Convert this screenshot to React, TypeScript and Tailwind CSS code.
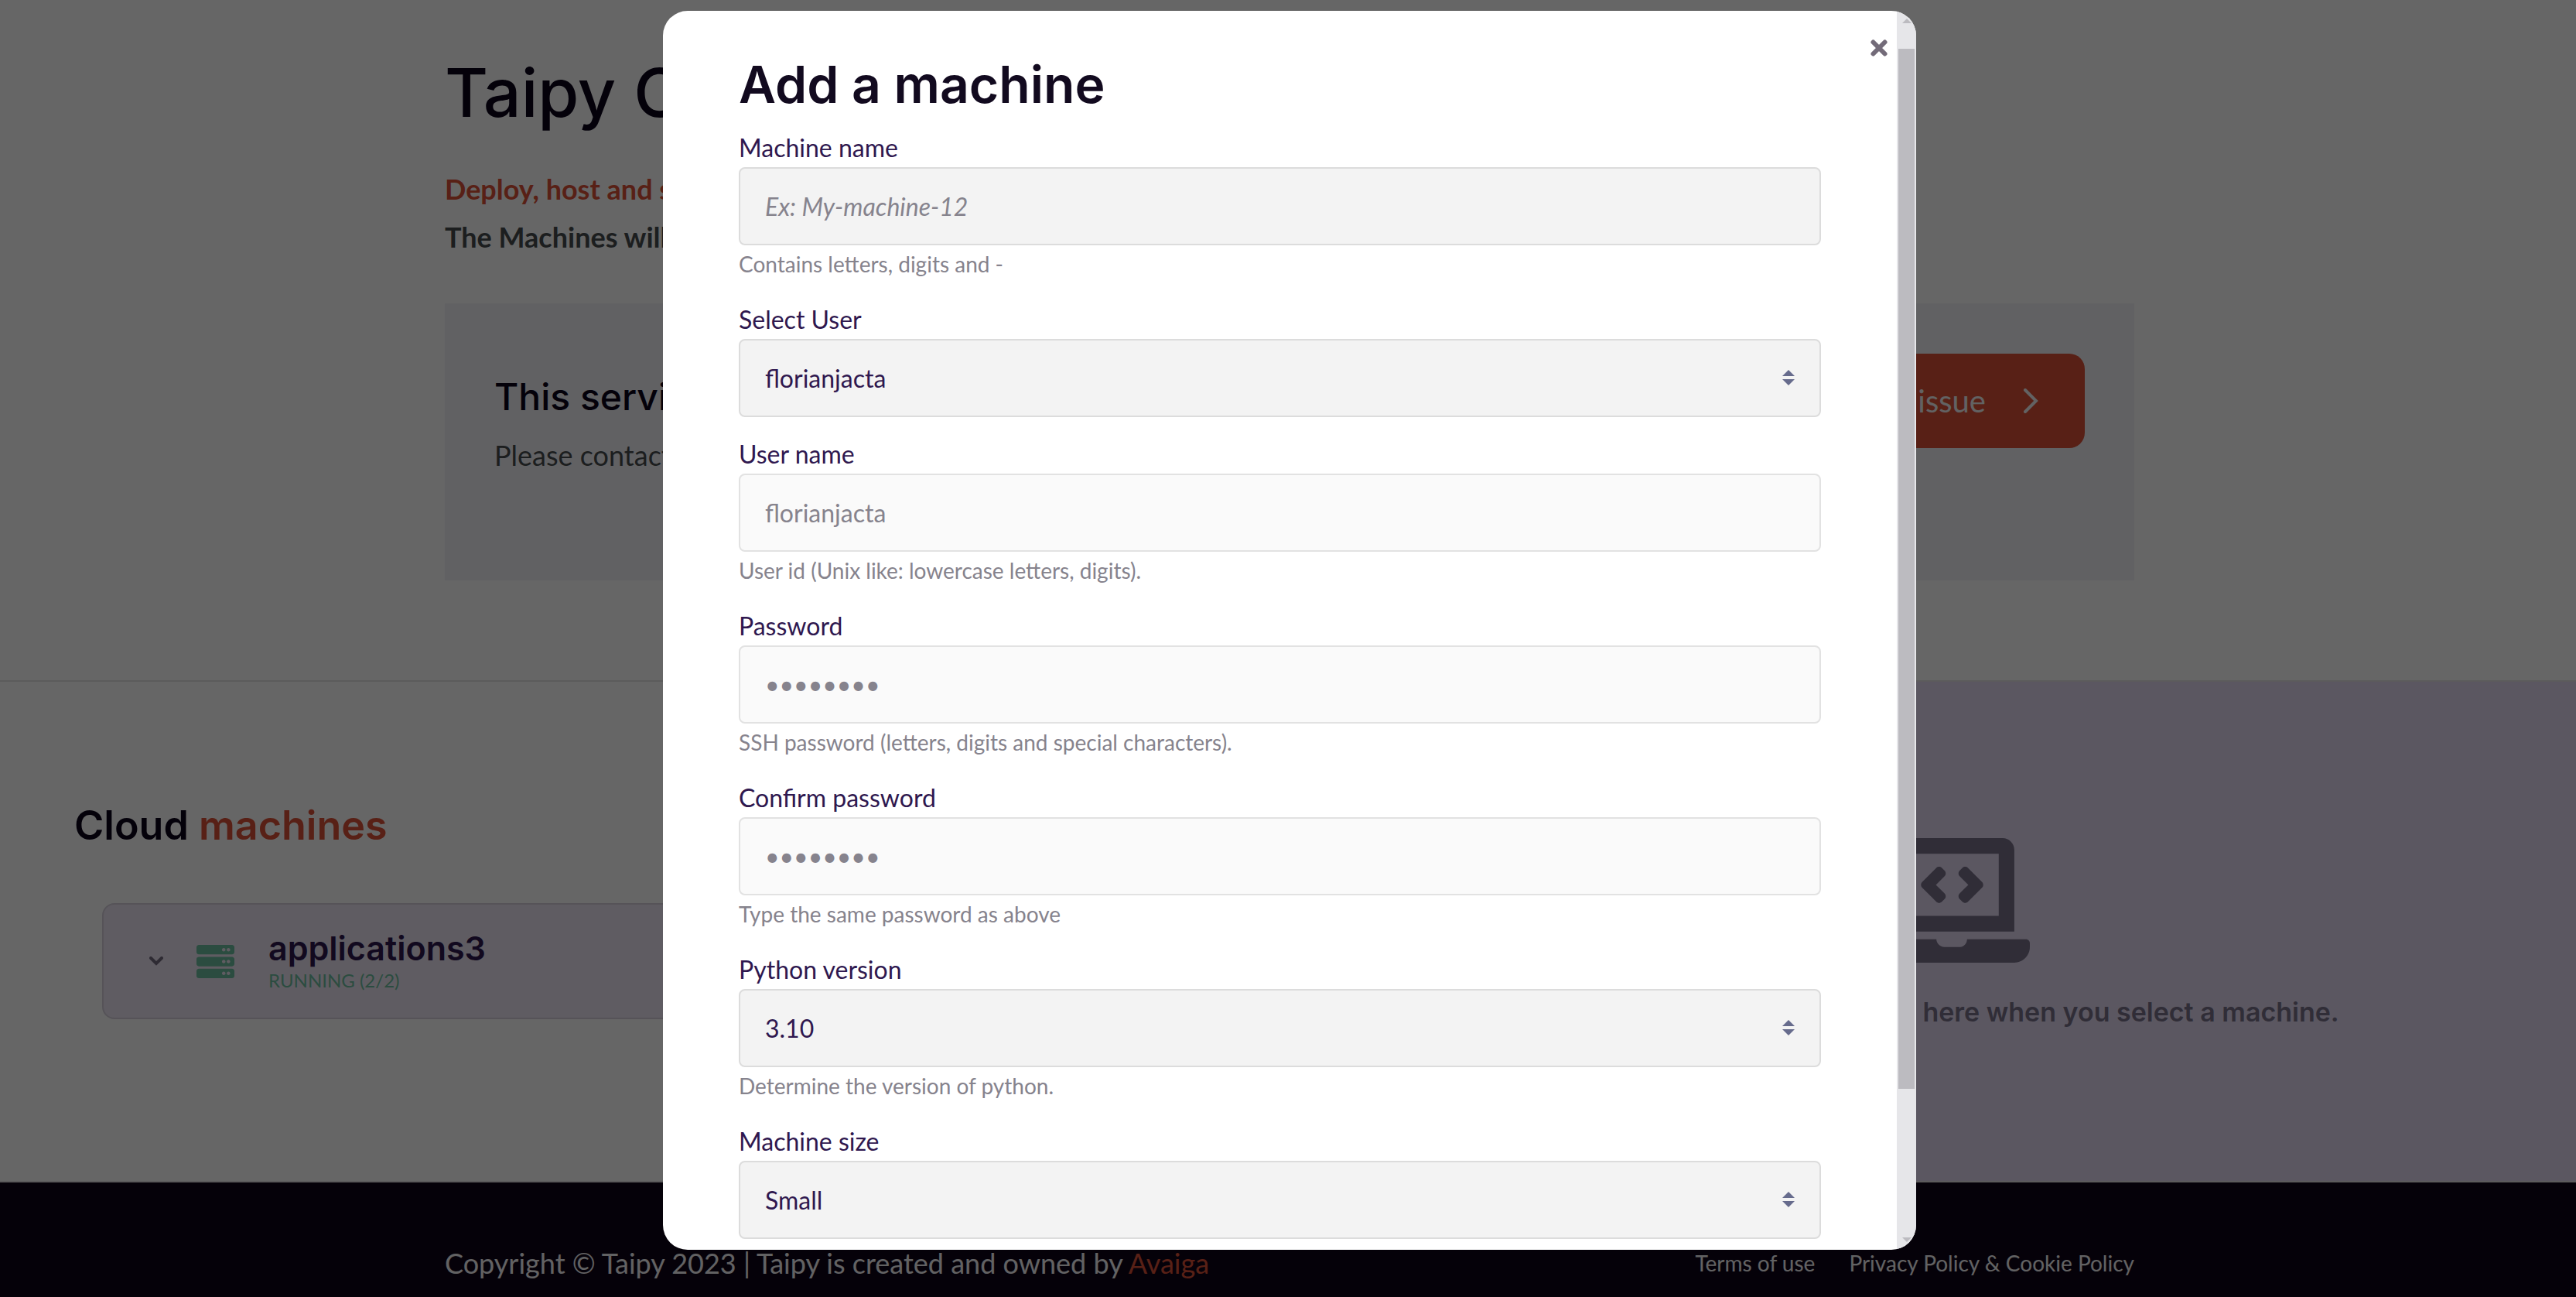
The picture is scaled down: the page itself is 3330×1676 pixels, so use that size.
import React from "react";
import { FaLaptopCode, FaServer } from "react-icons/fa";

const lato = "font-['Lato','Noto_Sans',sans-serif]";
const display = "font-['Inter','Noto_Sans',sans-serif]";

type FieldProps = {
  id: string;
  label: string;
  hint?: string;
  children: React.ReactNode;
};

function Field({ id, label, hint, children }: FieldProps) {
  return (
    <div className="mb-[25px] flex flex-col">
      <label htmlFor={id} className="mb-0.5 text-[32px] leading-[46px] text-[#2f184f]">
        {label}
      </label>
      {children}
      {hint && <p className="mt-1 pb-1 text-[28px] leading-10 text-[#86838d]">{hint}</p>}
    </div>
  );
}

const box = "block h-[101px] w-full rounded-lg border-2 px-8 text-[32px] outline-none";

function TextBox(props: React.InputHTMLAttributes<HTMLInputElement>) {
  return (
    <input
      {...props}
      className={`${box} border-[#dcdcdc] bg-[#f3f3f3] text-[#2f184f] placeholder:text-[#86838d] placeholder:italic placeholder:opacity-100 disabled:border-[#e2e2e2] disabled:bg-[#fafafa] disabled:text-[#86838d]`}
    />
  );
}

function SelectBox({ id, options }: { id: string; options: string[] }) {
  return (
    <div className="relative">
      <select id={id} className={`${box} appearance-none border-[#dcdcdc] bg-[#f3f3f3] text-[#2f184f]`}>
        {options.map((o) => (
          <option key={o}>{o}</option>
        ))}
      </select>
      <svg viewBox="0 0 16 20" className="pointer-events-none absolute top-10 right-[34px] h-5 w-4 fill-[#666b8c]" aria-hidden="true">
        <path d="M8 0l8 8H0zM0 12h16l-8 8z" />
      </svg>
    </div>
  );
}

function Dialog() {
  return (
    <div className="absolute inset-0 flex items-start justify-center bg-black/60 pt-3.5 pl-1">
      <div
        role="dialog"
        aria-labelledby="dialog-title"
        className="relative flex h-[calc(100vh-75px)] w-full max-w-[1620px] overflow-hidden rounded-[32px] bg-white"
      >
        <form className="min-w-0 flex-1 overflow-hidden px-[98px] pt-[52px]">
          <h2 id="dialog-title" className={`${display} mb-4 text-[66px] leading-[86px] font-semibold text-[#120a1f]`}>
            Add a machine
          </h2>
          <Field id="machine-name" label="Machine name" hint="Contains letters, digits and -">
            <TextBox id="machine-name" type="text" placeholder="Ex: My-machine-12" />
          </Field>
          <Field id="select-user" label="Select User">
            <SelectBox id="select-user" options={["florianjacta"]} />
          </Field>
          <Field id="user-name" label="User name" hint="User id (Unix like: lowercase letters, digits).">
            <TextBox id="user-name" type="text" defaultValue="florianjacta" disabled />
          </Field>
          <Field id="password" label="Password" hint="SSH password (letters, digits and special characters).">
            <TextBox id="password" type="password" defaultValue="password" disabled />
          </Field>
          <Field id="confirm" label="Confirm password" hint="Type the same password as above">
            <TextBox id="confirm" type="password" defaultValue="password" disabled />
          </Field>
          <Field id="python" label="Python version" hint="Determine the version of python.">
            <SelectBox id="python" options={["3.10"]} />
          </Field>
          <Field id="size" label="Machine size">
            <SelectBox id="size" options={["Small"]} />
          </Field>
        </form>
        <button type="button" aria-label="Close" className="absolute top-9 right-9 text-[#736b79]">
          <svg viewBox="0 0 24 24" className="size-6 fill-none stroke-current stroke-[6]" aria-hidden="true">
            <path d="M4.500 4.500l15 15M19.500 4.500l-15 15" strokeLinecap="round" />
          </svg>
        </button>
        <div className="flex w-[25px] flex-col items-center bg-[#e6e6e9] pt-2.5 pb-2.5">
          <svg viewBox="0 0 12 6" className="h-1.5 w-3 fill-[#bcbbc0]" aria-hidden="true">
            <path d="M6 0l6 6H0z" />
          </svg>
          <div className="mt-[33px] flex w-full flex-1 flex-col px-0.5">
            <div className="h-[87.500%] bg-[#bcbbc0]" />
          </div>
          <svg viewBox="0 0 12 6" className="h-1.5 w-3 fill-[#bcbbc0]" aria-hidden="true">
            <path d="M0 0h12l-6 6z" />
          </svg>
        </div>
      </div>
    </div>
  );
}

export default function App() {
  return (
    <div className={`${lato} relative flex h-screen flex-col overflow-hidden bg-white`}>
      <header className="h-[879px] pt-[70px] pl-1">
        <div className="mx-auto w-full max-w-[2184px]">
          <h1 className={`${display} text-[86px] leading-[100px] font-medium text-[#0b041a]`}>Taipy Cloud</h1>
          <p className="mt-[43px] text-[36px] leading-[62px] font-bold text-[#dd5237]">Deploy, host and share your applications</p>
          <p className="text-[36px] leading-[62px] font-bold text-[#484b4e]">The Machines will be available soon</p>
          <section className="mt-[55px] flex h-[358px] items-start justify-between bg-[#f3f3f8] px-16 pt-[65px]">
            <div>
              <h2 className={`${display} mt-6 text-[48px] leading-[64px] font-medium text-[#0b041a]`}>This service is in beta</h2>
              <p className="mt-[18px] text-[36px] leading-[50px] text-[#484b4e]">Please contact us with any feedback</p>
            </div>
            <button type="button" className="flex h-[122px] items-center gap-12 rounded-[20px] bg-[#dc5237] px-[60px] text-[40px] text-[#f6f6f8]">
              Report an issue
              <svg viewBox="0 0 20 32" className="h-8 w-5 fill-none stroke-current stroke-[4]" aria-hidden="true">
                <path d="M3 2l14 14L3 30" strokeLinecap="round" />
              </svg>
            </button>
          </section>
        </div>
      </header>
      <main className="grid h-[649px] grid-cols-[1716fr_1614fr] border-y-2 border-[#e6e4e6]">
        <section className="pt-[154px] pr-24 pl-24">
          <h2 className={`${display} text-[52px] leading-[64px] font-semibold text-[#0b041a]`}>
            Cloud <span className="text-[#dd5237]">machines</span>
          </h2>
          <button
            type="button"
            className="mt-[68px] ml-9 flex h-[150px] w-full items-center rounded-2xl border-2 border-[#d6d0dd] bg-[#eee7f4] pl-[59px] text-left"
          >
            <svg viewBox="0 0 18 12" className="h-3 w-[18px] fill-none stroke-[#736b80] stroke-[4]" aria-hidden="true">
              <path d="M2 2l7 7 7-7" strokeLinecap="round" />
            </svg>
            <FaServer className="ml-[43px] size-[49px] text-[#6cbea0]" />
            <span className="ml-[44px] flex flex-col">
              <span className={`${display} text-[43px] leading-[50px] font-semibold text-[#2f184f]`}>applications3</span>
              <span className="text-[24px] leading-[34px] text-[#6cbea0]">RUNNING (2/2)</span>
            </span>
          </button>
        </section>
        <section className={`${display} flex flex-col items-center bg-[#e3daf2] pt-[202px] text-[#78718a]`}>
          <FaLaptopCode className="h-[161px] w-[201px]" />
          <p className="mt-[40px] text-[34px] leading-[48px] font-semibold">The machine details appear here when you select a machine.</p>
        </section>
      </main>
      <footer className="flex-1 bg-[#0e0418] pt-[80px] pl-1 text-[#f6f6f8]">
        <div className="mx-auto flex w-full max-w-[2184px] items-center justify-between">
          <p className="text-[36px] leading-[48px]">
            Copyright © Taipy 2023 | Taipy is created and owned by{" "}
            <a href="#avaiga" className="text-[#dd5237]">
              Avaiga
            </a>
          </p>
          <nav className="flex gap-11 text-[28px] leading-[48px]">
            <a href="#terms">Terms of use</a>
            <a href="#privacy">Privacy Policy &amp; Cookie Policy</a>
          </nav>
        </div>
      </footer>
      <Dialog />
    </div>
  );
}
